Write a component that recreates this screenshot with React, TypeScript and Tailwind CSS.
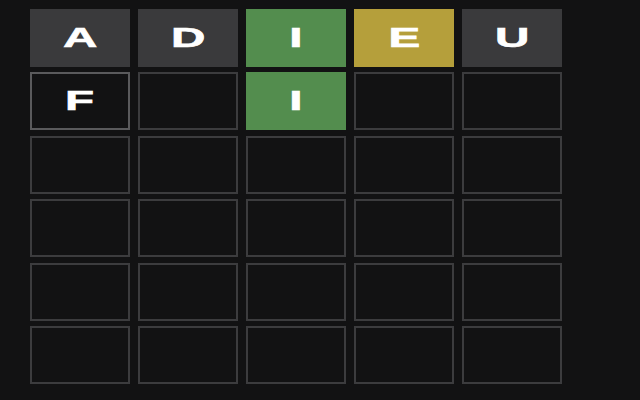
import React from "react";

type S = "g" | "c" | "p" | "e" | "t";
const rows: { l: string; s: S }[][] = [
  [
    { l: "A", s: "g" },
    { l: "D", s: "g" },
    { l: "I", s: "c" },
    { l: "E", s: "p" },
    { l: "U", s: "g" },
  ],
  [
    { l: "F", s: "t" },
    { l: "", s: "e" },
    { l: "I", s: "c" },
    { l: "", s: "e" },
    { l: "", s: "e" },
  ],
];
for (let i = 0; i < 4; i++) rows.push(Array.from({ length: 5 }, () => ({ l: "", s: "e" as S })));

function Tile({ l, s }: { l: string; s: S }) {
  const cls =
    s === "g"
      ? "bg-[#3a3a3c]"
      : s === "c"
      ? "bg-[#538d4e]"
      : s === "p"
      ? "bg-[#b59f3b]"
      : s === "t"
      ? "border-2 border-[#5a5a5c] bg-[#121213]"
      : "border-2 border-[#3c3c3e] bg-[#121213]";
  return (
    <div className={`flex items-center justify-center ${cls}`}>
      <span
        className="inline-block scale-x-[1.7] text-[28px] font-bold leading-none text-white [-webkit-text-stroke:0.6px_white]"
        style={{ fontFamily: '"Liberation Sans", Arial, sans-serif' }}
      >
        {l}
      </span>
    </div>
  );
}

export default function App() {
  return (
    <div className="h-[400px] w-[640px] bg-[#121213] pl-[30px] pt-[9px]">
      <div className="grid w-[532px] grid-cols-[repeat(5,100px)] grid-rows-[repeat(6,58px)] gap-x-[8px] gap-y-[5.4px]">
        {rows.flat().map((t, i) => (
          <Tile key={i} l={t.l} s={t.s} />
        ))}
      </div>
    </div>
  );
}
